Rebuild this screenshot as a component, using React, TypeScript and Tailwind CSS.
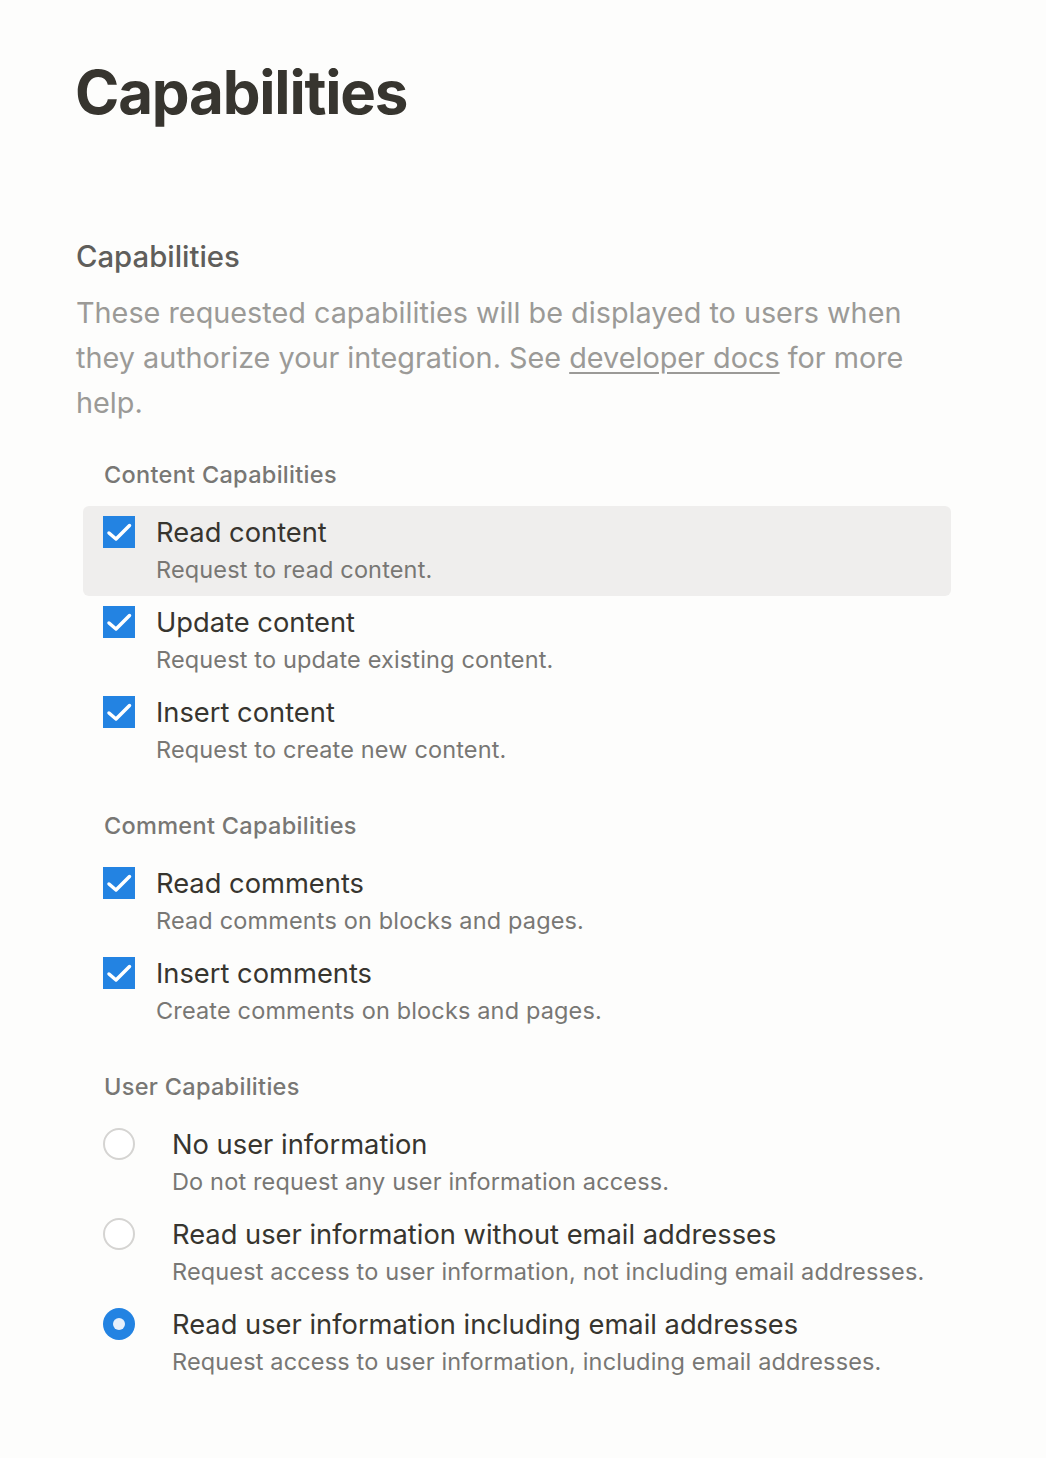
type Item = { title: string; desc: string; checked?: boolean };

const contentItems: Item[] = [
  { title: 'Read content', desc: 'Request to read content.' },
  { title: 'Update content', desc: 'Request to update existing content.' },
  { title: 'Insert content', desc: 'Request to create new content.' },
];

const commentItems: Item[] = [
  { title: 'Read comments', desc: 'Read comments on blocks and pages.' },
  { title: 'Insert comments', desc: 'Create comments on blocks and pages.' },
];

const userItems: Item[] = [
  { title: 'No user information', desc: 'Do not request any user information access.' },
  { title: 'Read user information without email addresses', desc: 'Request access to user information, not including email addresses.' },
  { title: 'Read user information including email addresses', desc: 'Request access to user information, including email addresses.', checked: true },
];

function CheckRow({ item, hover }: { item: Item; hover?: boolean }) {
  return (
    <div className={`flex pl-5 pr-4 pt-[10px] pb-2 rounded-md ${hover ? 'bg-[#efeeed]' : ''}`}>
      <div className="w-8 h-8 shrink-0 bg-[#2383e2] flex items-center justify-center">
        <svg width="32" height="32" viewBox="0 0 32 32" fill="none">
          <path d="M6 17L13 23L26.5 9.5" stroke="white" strokeWidth="3.5" strokeLinecap="round" strokeLinejoin="round" />
        </svg>
      </div>
      <div className="ml-[21px]">
        <div className="text-[27.3px] leading-[32px] pt-px text-[#37352f]">{item.title}</div>
        <div className="mt-[3px] text-[23.5px] leading-[36px] tracking-[0.15px] text-[#787774]">{item.desc}</div>
      </div>
    </div>
  );
}

function RadioRow({ item }: { item: Item }) {
  return (
    <div className="flex pl-5 pr-4 pt-[10px] pb-2">
      {item.checked ? (
        <div className="w-8 h-8 shrink-0 rounded-full bg-[#2383e2] flex items-center justify-center">
          <div className="w-3 h-3 rounded-full bg-[#e7f0fb]" />
        </div>
      ) : (
        <div className="w-8 h-8 shrink-0 rounded-full border-2 border-[#d5d4d2] bg-white" />
      )}
      <div className="ml-[37px]">
        <div className="text-[27.3px] leading-[32px] pt-px text-[#37352f]">{item.title}</div>
        <div className="mt-[3px] text-[23.5px] leading-[36px] tracking-[0.15px] text-[#787774]">{item.desc}</div>
      </div>
    </div>
  );
}

function GroupLabel({ children }: { children: string }) {
  return (
    <div className="pl-[21px] text-[23.5px] leading-[30px] font-medium tracking-[0.3px] text-[#787774] mb-4">{children}</div>
  );
}

export default function App() {
  return (
    <div className="min-h-screen bg-[#fdfdfc] font-['Inter',sans-serif] pt-14 pl-[76px] pr-[95px] pb-16">
      <h1 className="text-[60px] leading-[72px] font-bold text-[#37352f] tracking-[-1.2px] -ml-[1px]">Capabilities</h1>

      <div className="mt-[111px]">
        <h2 className="text-[29.3px] leading-[36px] font-medium text-[#5f5e5b]">Capabilities</h2>
        <p className="mt-[15px] text-[28.8px] leading-[45px] text-[#9b9a97]">
          These requested capabilities will be displayed to users when they authorize your integration. See{' '}
          <a className="underline underline-offset-4 decoration-[#9b9a97]">developer docs</a> for more help.
        </p>
      </div>

      <div className="mt-[35px] ml-[7px]">
        <GroupLabel>Content Capabilities</GroupLabel>
        <div className="flex flex-col">
          {contentItems.map((it, i) => (
            <CheckRow key={it.title} item={it} hover={i === 0} />
          ))}
        </div>

        <div className="mt-[35px]">
          <GroupLabel>Comment Capabilities</GroupLabel>
          <div className="flex flex-col">
            {commentItems.map((it) => (
              <CheckRow key={it.title} item={it} />
            ))}
          </div>
        </div>

        <div className="mt-[35px]">
          <GroupLabel>User Capabilities</GroupLabel>
          <div className="flex flex-col">
            {userItems.map((it) => (
              <RadioRow key={it.title} item={it} />
            ))}
          </div>
        </div>
      </div>
    </div>
  );
}
